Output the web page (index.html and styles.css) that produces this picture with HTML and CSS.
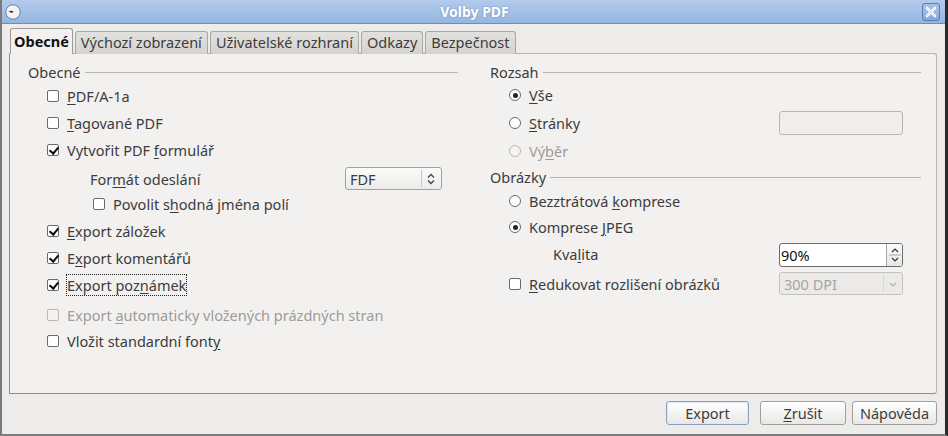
FILE: index.html
```html
<!DOCTYPE html>
<html lang="cs">
<head>
<meta charset="utf-8">
<title>Volby PDF</title>
<link rel="stylesheet" href="styles.css">
</head>
<body>
<div class="window">
  <div class="titlebar">
    <svg class="app-icon" width="16" height="16" viewBox="0 0 16 16">
      <circle cx="8" cy="8" r="7.2" fill="#f4f4f4" stroke="#6d7f99" stroke-width="1"/>
      <path d="M3.5 7.5 Q6 6 8.5 7.8 L7 9 Q5 8 3.5 7.5Z" fill="#333"/>
    </svg>
    <div class="title">Volby PDF</div>
    <div class="close-btn">
      <svg width="14" height="14" viewBox="0 0 14 14"><path d="M3 3 L11 11 M11 3 L3 11" stroke="#fff" stroke-width="2.6" stroke-linecap="round"/><path d="M3 3 L11 11 M11 3 L3 11" stroke="#6d86ad" stroke-width="0.6" stroke-linecap="round" opacity="0.5"/></svg>
    </div>
  </div>
  <div class="body">
    <div class="tabs">
      <div class="tab active">Obecné</div>
      <div class="tab">Výchozí zobrazení</div>
      <div class="tab">Uživatelské rozhraní</div>
      <div class="tab">Odkazy</div>
      <div class="tab">Bezpečnost</div>
    </div>
    <div class="panel">
      <div class="col">
        <div class="head"><span>Obecné</span><i></i></div>
        <div class="row first"><span class="cb"></span><span><u>P</u>DF/A-1a</span></div>
        <div class="row"><span class="cb"></span><span><u>T</u>agované PDF</span></div>
        <div class="row"><span class="cb checked"></span><span>Vytvořit PDF <u>f</u>ormulář</span></div>
        <div class="row fmt"><span class="sublabel">For<u>m</u>át odeslání</span>
          <span class="combo fdf"><span class="combo-text">FDF</span><span class="combo-sep"></span>
            <svg width="10" height="14" viewBox="0 0 10 14"><path d="M2 5.5 L5 2.5 L8 5.5 M2 8.5 L5 11.5 L8 8.5" fill="none" stroke="#444" stroke-width="1.3"/></svg>
          </span>
        </div>
        <div class="row sub"><span class="cb"></span><span>Povolit s<u>h</u>odná jména polí</span></div>
        <div class="row"><span class="cb checked"></span><span><u>E</u>xport záložek</span></div>
        <div class="row"><span class="cb checked"></span><span>E<u>x</u>port komentářů</span></div>
        <div class="row"><span class="cb checked"></span><span class="focus">Export poz<u>n</u>ámek</span></div>
        <div class="row disabled gap"><span class="cb"></span><span>Export <u>a</u>utomaticky vložených prázdných stran</span></div>
        <div class="row last"><span class="cb"></span><span>Vložit standardní font<u>y</u></span></div>
      </div>
      <div class="col right">
        <div class="head"><span>Rozsah</span><i></i></div>
        <div class="row r"><span class="rb on"></span><span><u>V</u>še</span></div>
        <div class="row r"><span class="rb"></span><span class="grow"><u>S</u>tránky</span><span class="entry"></span></div>
        <div class="row r disabled"><span class="rb"></span><span>Vý<u>b</u>ěr</span></div>
        <div class="head h2"><span>Obrázky</span><i></i></div>
        <div class="row r2 firstimg"><span class="rb"></span><span>Bezztrátová <u>k</u>omprese</span></div>
        <div class="row r2"><span class="rb on"></span><span>Komprese <u>J</u>PEG</span></div>
        <div class="row kval"><span class="sublabel grow">Kva<u>l</u>ita</span>
          <span class="spin"><span class="spin-text">90%</span><span class="spin-btns">
            <svg width="14" height="22" viewBox="0 0 14 22"><path d="M4 8 L7 5 L10 8" fill="none" stroke="#333" stroke-width="1.2"/><path d="M1 11 H13" stroke="#aaa"/><path d="M4 14 L7 17 L10 14" fill="none" stroke="#333" stroke-width="1.2"/></svg>
          </span></span>
        </div>
        <div class="row redu"><span class="cb"></span><span class="grow"><u>R</u>edukovat rozlišení obrázků</span>
          <span class="combo dpi"><span class="combo-text">300 DPI</span><span class="combo-sep light"></span>
            <svg width="18" height="14" viewBox="0 0 18 14"><path d="M6 6 L9 9 L12 6" fill="none" stroke="#b0b0b0" stroke-width="1.2"/></svg>
          </span>
        </div>
      </div>
    </div>
    <div class="buttons">
      <div class="btn default">Export</div>
      <div class="btn"><u>Z</u>rušit</div>
      <div class="btn">Nápověda</div>
    </div>
  </div>
</div>
</body>
</html>
```
FILE: styles.css
```css
* { box-sizing: border-box; }
html, body { margin: 0; padding: 0; }
body {
  width: 948px;
  height: 436px;
  overflow: hidden;
  font-family: "Noto Sans", "DejaVu Sans", sans-serif;
  font-size: 14.5px;
  color: #3c3c3c;
  background: #edeceb;
}
u { text-decoration: underline; text-underline-offset: 2px; }
.window {
  width: 948px;
  height: 436px;
  display: flex;
  flex-direction: column;
  border-left: 2px solid #7a7a7a;
  border-right: 3px solid #2a2a2a;
  border-bottom: 2px solid #7d7d7d;
  background: #edeceb;
}
.titlebar {
  height: 24px;
  flex: none;
  display: flex;
  align-items: center;
  padding: 0 5px 0 3px;
  background: linear-gradient(#b3cbec, #94b6e2);
  border-bottom: 1px solid #6b8ebf;
}
.app-icon { flex: none; }
.title {
  flex: 1;
  text-align: center;
  color: #fff;
  font-weight: bold;
  font-size: 14px;
  padding-left: 6px;
  text-shadow: 0 0 2px rgba(60,90,140,0.5);
}
.close-btn {
  width: 18px;
  height: 18px;
  border: 1px solid #5c7cab;
  border-radius: 3px;
  background: linear-gradient(#a9c3e8, #86a9da);
  display: flex;
  align-items: center;
  justify-content: center;
}
.body {
  flex: 1;
  display: flex;
  flex-direction: column;
  padding: 4px 8px 0 7px;
}
.tabs {
  display: flex;
  align-items: flex-end;
  height: 26px;
  padding-left: 1px;
  gap: 2px;
  position: relative;
  z-index: 1;
}
.tab {
  height: 23px;
  padding: 0 5px;
  line-height: 21px;
  color: #3c3c3c;
  background: linear-gradient(#e2e1de, #d5d3cf);
  border: 1px solid #a9a7a2;
  border-bottom: none;
  border-radius: 3px 3px 0 0;
}
.tab.active {
  height: 26px;
  line-height: 25px;
  padding: 0 3px;
  font-weight: bold;
  color: #111;
  background: #f2f1f0;
  border-color: #9c9a96;
}
.panel {
  height: 341px;
  margin-top: -1px;
  display: grid;
  grid-template-columns: 430px 431px;
  column-gap: 32px;
  padding: 9px 16px 0 18px;
  background: #f2f1f0;
  border: 1px solid #b6b4b0;
  border-left-color: #8e8c88;
  border-bottom-color: #8e8c88;
  border-radius: 0 3px 3px 0;
}
.col { display: flex; flex-direction: column; }
.head {
  height: 18px;
  flex: none;
  display: flex;
  align-items: center;
  gap: 4px;
  color: #3c3c3c;
}
.head i {
  flex: 1;
  height: 1px;
  background: #b9b7b3;
  margin-top: 1px;
}
.h2 { margin-top: 3px; }
.row {
  height: 27px;
  flex: none;
  display: flex;
  align-items: center;
  padding-left: 19px;
  gap: 8px;
}
.row.first { margin-top: 1px; }
.row.r { height: 28px; }
.row.r2 { height: 26px; }
.row.firstimg { margin-top: 2px; }
.row.kval { height: 27px; padding-left: 63px; }
.row.redu { height: 33px; }
.row.gap { margin-top: 3px; }
.row.fmt { padding-left: 62px; margin-top: 2px; gap: 0; }
.row.sub { padding-left: 65px; margin-top: -2px; }
.row.last { margin-top: -1px; }
.row .grow { flex: 1; }
.cb {
  width: 12px;
  height: 12px;
  flex: none;
  border: 1px solid #6a6a6a;
  border-radius: 2px;
  background: #fff;
  position: relative;
}
.cb.checked::after {
  content: "";
  position: absolute;
  left: 3px;
  top: 0px;
  width: 4px;
  height: 7px;
  border: solid #111;
  border-width: 0 2px 2px 0;
  transform: rotate(40deg);
}
.rb {
  width: 12px;
  height: 12px;
  flex: none;
  border: 1px solid #6a6a6a;
  border-radius: 50%;
  background: #fff;
  position: relative;
}
.rb.on::after {
  content: "";
  position: absolute;
  left: 2.5px;
  top: 2.5px;
  width: 5px;
  height: 5px;
  border-radius: 50%;
  background: #222;
}
.disabled { color: #9d9c9a; }
.disabled .cb, .disabled .rb { border-color: #b8b7b4; background: #f4f3f2; }
.focus { outline: 1px dotted #222; outline-offset: 0px; }
.sublabel { flex: none; }
.row.fmt .sublabel { width: 255px; }
.combo {
  display: flex;
  align-items: center;
  height: 23px;
  border: 1px solid #a3a19d;
  border-radius: 3px;
  background: linear-gradient(#fbfbfa, #ecebea);
}
.combo.fdf { width: 97px; padding-left: 4px; }
.combo-text { flex: 1; }
.combo-sep { width: 1px; height: 17px; background: #c8c6c3; margin-right: 4px; }
.combo-sep.light { background: #d8d7d5; margin-right: 0; }
.combo.fdf svg { margin-right: 5px; }
.combo.dpi {
  width: 124px;
  padding-left: 4px;
  color: #a5a4a2;
  background: #ebeae8;
  border-color: #c3c2bf;
  height: 23px;
  margin-right: 18px;
}
.entry {
  width: 124px;
  height: 24px;
  border: 1px solid #b8b6b2;
  border-radius: 3px;
  background: #efeeec;
  margin-right: 18px;
}
.spin {
  width: 124px;
  height: 24px;
  display: flex;
  border: 1px solid #6c6b69;
  border-radius: 3px;
  background: #fff;
  overflow: hidden;
  margin-top: 2px;
  margin-right: 18px;
}
.spin-text { flex: 1; color: #111; padding-left: 1px; line-height: 22px; }
.spin-btns {
  width: 16px;
  border-left: 1px solid #a8a6a2;
  background: linear-gradient(#fbfbfa, #e8e7e5);
  display: flex;
  align-items: center;
  justify-content: center;
}
.buttons {
  display: flex;
  justify-content: flex-end;
  gap: 9px;
  padding-top: 7px;
}
.btn {
  height: 24px;
  line-height: 22px;
  text-align: center;
  border: 1px solid #a19f9b;
  border-radius: 3px;
  background: linear-gradient(#ffffff, #e9e8e6);
  color: #3c3c3c;
}
.btn:nth-child(1) { width: 83px; }
.btn:nth-child(2) { width: 86px; margin-left: 2px; }
.btn:nth-child(3) { width: 85px; margin-left: -3px; }
.btn.default { border-color: #8aa0c0; box-shadow: inset 0 0 0 1px #dfe7f3; }
```
